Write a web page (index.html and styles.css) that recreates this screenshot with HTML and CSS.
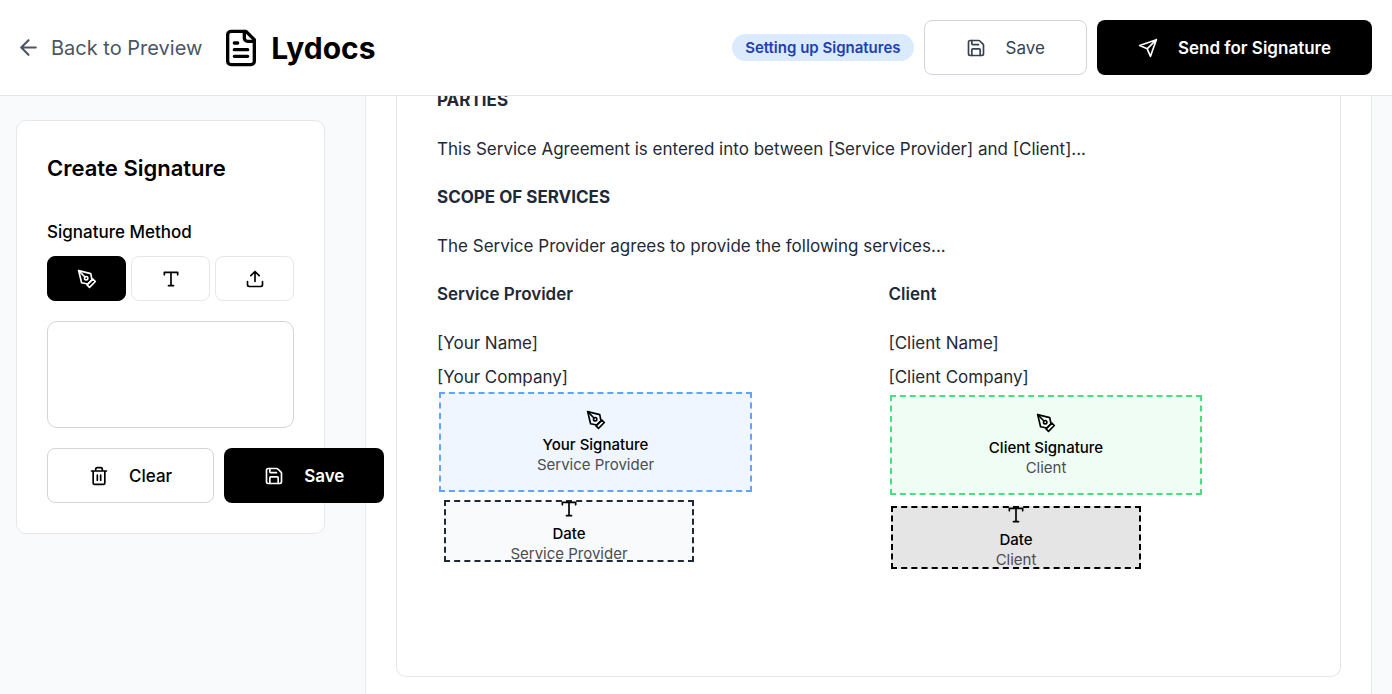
FILE: index.html
```html
<!DOCTYPE html>
<html lang="en">
<head>
<meta charset="utf-8">
<meta name="viewport" content="width=device-width, initial-scale=1">
<title>Lydocs</title>
<link rel="stylesheet" href="styles.css">
</head>
<body>
<svg class="sprite" aria-hidden="true">
  <symbol id="pen" viewBox="0 0 24 24"><path d="m12 19 7-7 3 3-7 7-3-3z"/><path d="m18 13-1.500-7.500L2 2l3.500 14.500L13 18l5-5z"/><path d="m2 2 7.586 7.586"/><circle cx="11" cy="11" r="2"/></symbol>
  <symbol id="type" viewBox="0 0 24 24"><path d="M4 7V4h16v3M9 20h6M12 4v16"/></symbol>
  <symbol id="upload" viewBox="0 0 24 24"><path d="M21 15v4a2 2 0 0 1-2 2H5a2 2 0 0 1-2-2v-4M17 8l-5-5-5 5M12 3v12"/></symbol>
  <symbol id="disk" viewBox="0 0 24 24"><path d="M15.200 3a2 2 0 0 1 1.400.600l3.800 3.800a2 2 0 0 1 .600 1.400V19a2 2 0 0 1-2 2H5a2 2 0 0 1-2-2V5a2 2 0 0 1 2-2z"/><path d="M17 21v-7a1 1 0 0 0-1-1H8a1 1 0 0 0-1 1v7M7 3v4a1 1 0 0 0 1 1h7"/></symbol>
  <symbol id="trash" viewBox="0 0 24 24"><path d="M3 6h18M19 6v14c0 1-1 2-2 2H7c-1 0-2-1-2-2V6M8 6V4c0-1 1-2 2-2h4c1 0 2 1 2 2v2M10 11v6M14 11v6"/></symbol>
  <symbol id="send" viewBox="0 0 24 24"><path d="m22 2-7 20-4-9-9-4ZM22 2 11 13"/></symbol>
  <symbol id="arrow" viewBox="0 0 24 24"><path d="m12 19-7-7 7-7M19 12H5"/></symbol>
  <symbol id="file" viewBox="0 0 24 24"><path d="M15 2H6a2 2 0 0 0-2 2v16a2 2 0 0 0 2 2h12a2 2 0 0 0 2-2V7Z"/><path d="M14 2v4a2 2 0 0 0 2 2h4M10 9H8M16 13H8M16 17H8"/></symbol>
</svg>

<header class="topbar">
  <a class="back" href="#"><svg class="icon icon-back"><use href="#arrow"/></svg>Back to Preview</a>
  <div class="brand"><svg class="icon icon-brand"><use href="#file"/></svg><span>Lydocs</span></div>
  <div class="actions">
    <span class="badge">Setting up Signatures</span>
    <button class="btn btn-muted" type="button"><svg class="icon"><use href="#disk"/></svg>Save</button>
    <button class="btn btn-primary" type="button"><svg class="icon"><use href="#send"/></svg>Send for Signature</button>
  </div>
</header>

<div class="workspace">
  <aside class="sidebar">
    <section class="card">
      <h2 class="card-title">Create Signature</h2>
      <p class="card-label" id="method">Signature Method</p>
      <div class="methods" role="group" aria-labelledby="method">
        <button class="method method-active" type="button" aria-label="Draw" aria-pressed="true"><svg class="icon"><use href="#pen"/></svg></button>
        <button class="method" type="button" aria-label="Type" aria-pressed="false"><svg class="icon"><use href="#type"/></svg></button>
        <button class="method" type="button" aria-label="Upload" aria-pressed="false"><svg class="icon"><use href="#upload"/></svg></button>
      </div>
      <canvas class="pad" aria-label="Signature pad"></canvas>
      <div class="card-actions">
        <button class="btn" type="button"><svg class="icon"><use href="#trash"/></svg>Clear</button>
        <button class="btn btn-primary" type="button"><svg class="icon"><use href="#disk"/></svg>Save</button>
      </div>
    </section>
  </aside>

  <main class="viewer">
    <article class="paper">
      <h3 class="line">PARTIES</h3>
      <p class="line">This Service Agreement is entered into between [Service Provider] and [Client]...</p>
      <h3 class="line">SCOPE OF SERVICES</h3>
      <p class="line">The Service Provider agrees to provide the following services...</p>
      <div class="signers">
        <section class="signer">
          <h4 class="line">Service Provider</h4>
          <p class="line">[Your Name]<br>[Your Company]</p>
        </section>
        <section class="signer">
          <h4 class="line">Client</h4>
          <p class="line">[Client Name]<br>[Client Company]</p>
        </section>
      </div>
      <div class="field field-sign field-provider"><svg class="icon"><use href="#pen"/></svg><span class="field-name">Your Signature</span><span class="field-role">Service Provider</span></div>
      <div class="field field-date field-provider-date"><svg class="icon"><use href="#type"/></svg><span class="field-name">Date</span><span class="field-role">Service Provider</span></div>
      <div class="field field-sign field-client"><svg class="icon"><use href="#pen"/></svg><span class="field-name">Client Signature</span><span class="field-role">Client</span></div>
      <div class="field field-date field-client-date"><svg class="icon"><use href="#type"/></svg><span class="field-name">Date</span><span class="field-role">Client</span></div>
    </article>
  </main>
</div>
</body>
</html>
```

FILE: styles.css
```css
* { box-sizing: border-box; }

body {
  margin: 0;
  height: 100vh;
  display: flex;
  flex-direction: column;
  overflow: hidden;
  background: #f9fafc;
  color: #000;
  font-family: Inter, "Liberation Sans", sans-serif;
  font-size: 17px;
}

h2, h3, h4, p { margin: 0; }
button { font: inherit; color: inherit; cursor: pointer; }

.sprite { position: absolute; width: 0; height: 0; }

.icon {
  width: 20px;
  height: 20px;
  flex: none;
  fill: none;
  stroke: currentColor;
  stroke-width: 2;
  stroke-linecap: round;
  stroke-linejoin: round;
}
.icon-back { width: 25px; height: 25px; }
.icon-brand { width: 40px; height: 40px; }

.topbar {
  flex: none;
  display: flex;
  align-items: center;
  gap: 19px;
  padding: 20px 20px 20px 16px;
  background: #fff;
  border-bottom: 1px solid #e5e7eb;
}
.back {
  display: flex;
  align-items: center;
  gap: 10px;
  color: #4b5563;
  font-size: 20px;
  text-decoration: none;
}
.brand {
  display: flex;
  align-items: center;
  gap: 10px;
  font-size: 30px;
  font-weight: 700;
}
.actions {
  display: flex;
  align-items: center;
  gap: 10px;
  margin-left: auto;
}
.badge {
  padding: 4px 13px;
  border-radius: 16px;
  background: #dbeafe;
  color: #1e40af;
  font-size: 15px;
  font-weight: 600;
  line-height: 19px;
}

.btn {
  height: 55px;
  display: flex;
  align-items: center;
  gap: 20px;
  padding: 0 41px;
  border: 1px solid #d1d5db;
  border-radius: 8px;
  background: #fff;
  font-weight: 500;
  white-space: nowrap;
}
.btn-muted { color: #374151; font-weight: 400; }
.btn-primary { border: 0; background: #000; color: #fff; font-weight: 600; }
.card-actions .btn-primary { padding: 0 40px; }

.workspace {
  flex: 1;
  min-height: 0;
  display: flex;
  padding-right: 20px;
}

.sidebar {
  position: relative;
  z-index: 1;
  flex: none;
  width: 365px;
  padding: 24px 40px 24px 16px;
}
.card {
  padding: 30px;
  background: #fff;
  border: 1px solid #e5e7eb;
  border-radius: 10px;
}
.card-title {
  margin-bottom: 35px;
  font-size: 22px;
  font-weight: 600;
  line-height: 34px;
}
.card-label {
  margin-bottom: 12px;
  font-weight: 500;
  line-height: 24px;
}
.methods {
  display: grid;
  grid-template-columns: repeat(3, 1fr);
  gap: 5px;
  margin-bottom: 20px;
}
.method {
  display: flex;
  align-items: center;
  justify-content: center;
  height: 45px;
  padding: 0;
  border: 1px solid #e5e7eb;
  border-radius: 8px;
  background: #fff;
}
.method-active { border-color: #000; background: #000; color: #fff; }
.pad {
  display: block;
  width: 100%;
  height: 107px;
  margin-bottom: 20px;
  border: 1px solid #d1d5db;
  border-radius: 10px;
}
.card-actions { display: flex; gap: 10px; }

.viewer {
  flex: 1;
  min-width: 0;
  padding: 0 30px;
  overflow: hidden;
  background: #fff;
  border: solid #e5e7eb;
  border-width: 0 1px;
}
.paper {
  position: relative;
  display: flex;
  flex-direction: column;
  gap: 14px;
  margin-top: -13px;
  padding: 0 40px 282px;
  border: 1px solid #e5e7eb;
  border-top: 0;
  border-radius: 0 0 10px 10px;
  color: #1f2937;
}
.line { font-size: 17px; line-height: 34px; }
h3.line, h4.line { font-weight: 600; line-height: 35px; }
h3.line { font-weight: 700; }
.signers {
  display: grid;
  grid-template-columns: 1fr 1fr;
  gap: 40px;
}
.signer { display: flex; flex-direction: column; gap: 14px; }

.field {
  position: absolute;
  display: flex;
  flex-direction: column;
  align-items: center;
  justify-content: center;
  border: 2px dashed;
  color: #000;
  font-size: 15px;
  line-height: 20px;
}
.field-name { margin-top: 5px; font-weight: 500; }
.field-role { color: #4b4d50; }
.field-sign { width: 312px; height: 100px; }
.field-date { width: 250px; height: 62px; }
.field-provider { left: 42px; top: 309px; width: 313px; background: #eff6ff; border-color: #60a5fa; }
.field-provider-date { left: 47px; top: 417px; background: #f9fafb; border-color: #1f2937; }
.field-client { left: 493px; top: 312px; background: #f0fdf4; border-color: #4ade80; }
.field-client-date { left: 494px; top: 423px; height: 63px; background: #e5e5e5; border-color: #000; }
```
